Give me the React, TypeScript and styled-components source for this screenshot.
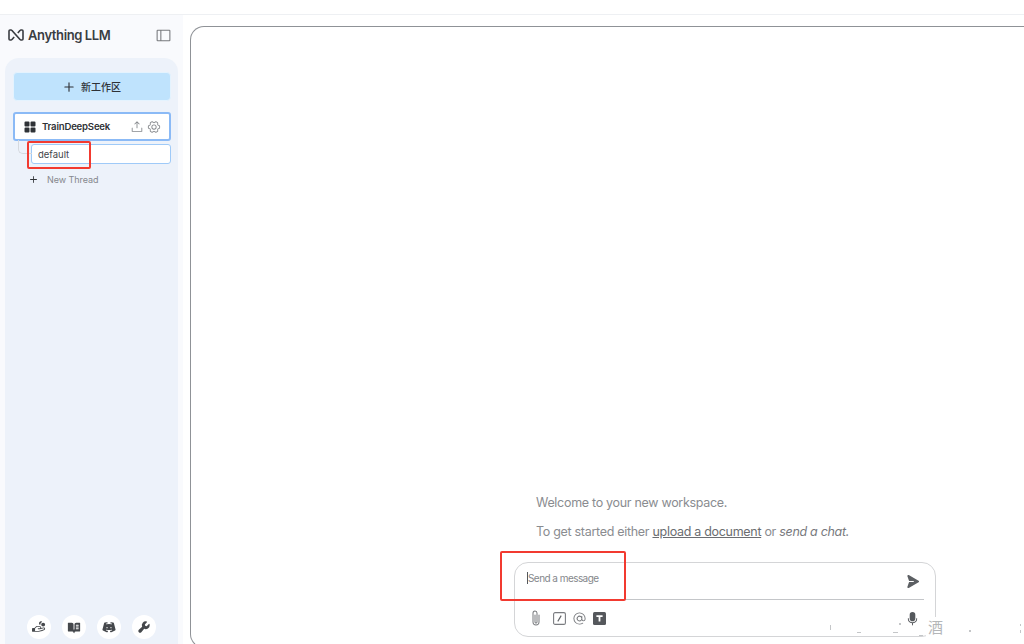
import styled, { createGlobalStyle } from "styled-components";
import {
    PiAt,
    PiBookOpenTextFill,
    PiDiscordLogoFill,
    PiGearSix,
    PiHandCoinsFill,
    PiMicrophoneFill,
    PiPaperclipHorizontal,
    PiPaperPlaneRightFill,
    PiPlusBold,
    PiSidebarSimple,
    PiSquaresFourFill,
    PiUploadSimple,
    PiWrenchFill,
} from "react-icons/pi";

const GlobalStyle = createGlobalStyle`
    html, body {
        margin: 0;
        background: #fff;
        font-family: "Inter", "Liberation Sans", sans-serif;
    }
    * {
        box-sizing: border-box;
    }
`;

const Page = styled.div`
    position: relative;
    width: 1024px;
    height: 644px;
    overflow: hidden;
    background: #fff;
    padding-top: 14px;
`;

const Shell = styled.div`
    height: 630px;
    display: grid;
    grid-template-columns: 190px 1fr;
    background: #fff;
    border-top: 1px solid #eef0f3;
`;

const Sidebar = styled.aside`
    display: flex;
    flex-direction: column;
    background: #f9fafd;
    padding-left: 5px;
    width: 183px;
`;

const SidebarHeader = styled.div`
    height: 43px;
    display: flex;
    align-items: center;
    justify-content: space-between;
    padding: 0 11px 3px 3px;
    color: #3f4247;
`;

const Logo = styled.div`
    display: flex;
    align-items: center;
    gap: 4px;
    font-size: 13px;
    font-weight: 600;
    letter-spacing: -0.4px;
    color: #3a3d42;
`;

const CollapseButton = styled.span`
    display: flex;
    font-size: 17px;
    color: #77797d;
`;

const SidebarPanel = styled.div`
    position: relative;
    flex: 1;
    width: 173px;
    display: flex;
    flex-direction: column;
    background: #edf2fa;
    border-radius: 14px 14px 0 0;
    padding: 14px 7px 5px 8px;
`;

const NewWorkspace = styled.button`
    height: 29px;
    width: 158px;
    display: flex;
    align-items: center;
    justify-content: center;
    gap: 6px;
    border: 1px solid #e4f3fe;
    border-radius: 4px;
    background: #bfe3fd;
    color: #2e3136;
    font-family: "Noto Sans CJK SC", sans-serif;
    font-size: 10px;
    font-weight: 500;
    padding: 0;

    svg {
        font-size: 12px;
    }
`;

const WorkspaceRow = styled.div`
    margin-top: 11px;
    height: 29px;
    display: flex;
    align-items: center;
    background: #fff;
    border: 2px solid #8bbaf6;
    border-radius: 3px;
    padding: 0 8px;
    color: #2f3236;
    font-size: 9.6px;
    font-weight: 600;
    letter-spacing: -0.2px;
`;

const WorkspaceName = styled.span`
    flex: 1;
    margin: 0 0 1px 4px;
`;

const RowIcon = styled.span<{ $gap?: number }>`
    display: flex;
    font-size: 14px;
    color: #85888c;
    margin-left: ${(p) => p.$gap ?? 0}px;
`;

const WorkspaceGlyph = styled.span`
    display: flex;
    font-size: 16px;
    margin-left: -1px;
    color: #2f3236;
`;

const ThreadConnector = styled.span`
    position: absolute;
    left: 13px;
    top: 82px;
    width: 14px;
    height: 14px;
    border: 1px solid #d5d9df;
    border-top: none;
    border-right: none;
    border-radius: 0 0 0 5px;
`;

const ThreadRow = styled.div`
    margin: 3px 0 0 18px;
    height: 20px;
    width: 140px;
    display: flex;
    align-items: center;
    padding-left: 6px;
    background: #fff;
    border: 1px solid #9fcaf8;
    border-radius: 3px;
    font-size: 9.5px;
    color: #43464a;
`;

const NewThread = styled.div`
    margin: 10px 0 0 16px;
    display: flex;
    align-items: center;
    gap: 9px;
    font-size: 9px;
    letter-spacing: -0.05px;
    color: #85888d;

    svg {
        font-size: 9px;
        color: #2f3236;
    }
`;

const FooterIcons = styled.div`
    margin-top: auto;
    display: flex;
    justify-content: center;
    gap: 11px;
    padding: 0 1px 4px 0;
`;

const RoundIcon = styled.span`
    width: 24px;
    height: 24px;
    display: flex;
    align-items: center;
    justify-content: center;
    border-radius: 50%;
    background: #fff;
    color: #45484c;
    font-size: 14px;
`;

const Main = styled.main`
    margin-top: 11px;
    height: 622px;
    display: flex;
    flex-direction: column;
    align-items: flex-end;
    justify-content: flex-end;
    background: #fff;
    border: 1px solid #8f9297;
    border-right: none;
    border-radius: 14px 0 0 14px;
    padding: 0 88px 10px 0;
`;

const ChatColumn = styled.div`
    width: 422px;
`;

const Welcome = styled.div`
    padding-left: 22px;
    margin-bottom: 23px;
    color: #8a8c90;
    font-size: 12.5px;
    letter-spacing: -0.3px;
    line-height: 15px;

    p {
        margin: 0 0 14px;
    }

    p:last-child {
        margin-bottom: 0;
    }

    a {
        color: #6b6d71;
        text-decoration: underline;
    }

    em {
        color: #77797d;
    }
`;

const PromptBox = styled.div`
    height: 75px;
    background: #fff;
    border: 1px solid #d4d5d7;
    border-radius: 14px;
`;

const InputRow = styled.div`
    height: 37px;
    display: flex;
    align-items: center;
    justify-content: space-between;
    margin-right: 11px;
    padding: 0 4px 0 12px;
    border-bottom: 1.5px solid #c4c6c9;
    color: #85878b;
    font-size: 10px;
    letter-spacing: -0.55px;
`;

const Caret = styled.span`
    border-left: 1px solid #55585c;
    margin-bottom: 6px;
`;

const SendIcon = styled.span`
    display: flex;
    font-size: 15px;
    color: #5c5f63;
`;

const ToolRow = styled.div`
    height: 36px;
    display: flex;
    align-items: center;
    padding: 0 15px 0 13px;
    color: #77797d;
    gap: 6px;
`;

const ToolIcon = styled.span`
    display: flex;
    font-size: 15px;
`;

const ClipIcon = styled(ToolIcon)`
    font-size: 16px;
    transform: rotate(90deg);
    margin-right: 3px;
`;

const MicIcon = styled(ToolIcon)`
    margin-left: auto;
    color: #55585c;
`;

const RedBox = styled.div<{ $x: number; $y: number; $w: number; $h: number }>`
    position: absolute;
    left: ${(p) => p.$x}px;
    top: ${(p) => p.$y}px;
    width: ${(p) => p.$w}px;
    height: ${(p) => p.$h}px;
    border: 2px solid #f23a30;
    border-radius: 2px;
    pointer-events: none;
`;

const Watermark = styled.div`
    position: absolute;
    left: 926px;
    top: 617px;
    height: 24px;
    padding: 0 2px;
    background: #fff;
    font-family: "Noto Sans CJK SC", sans-serif;
    font-size: 15px;
    line-height: 20px;
    color: #b4b6b8;
`;

const Speck = styled.span<{ $x: number; $y: number; $w: number; $h: number }>`
    position: absolute;
    left: ${(p) => p.$x}px;
    top: ${(p) => p.$y}px;
    width: ${(p) => p.$w}px;
    height: ${(p) => p.$h}px;
    background: #c4c6c8;
`;

const specks = [
    { x: 830, y: 625, w: 1, h: 5 },
    { x: 857, y: 632, w: 4, h: 1 },
    { x: 893, y: 632, w: 5, h: 1 },
    { x: 899, y: 623, w: 2, h: 2 },
    { x: 919, y: 635, w: 4, h: 1 },
    { x: 969, y: 630, w: 2, h: 2 },
    { x: 1020, y: 624, w: 1, h: 2 },
    { x: 1020, y: 630, w: 1, h: 3 },
];

function AnythingMark() {
    return (
        <svg width="16" height="12" viewBox="0 0 16 12" fill="none" stroke="#3a3d42" strokeWidth="1.6">
            <path d="M6.2 8 L4 10.4 Q3.6 11 3 11 H2 Q1 11 1 10 V2 Q1 1 2 1 H3 Q3.6 1 4 1.6 L12 10.4 Q12.4 11 13 11 H14 Q15 11 15 10 V2 Q15 1 14 1 H13 Q12.4 1 12 1.6 L9.8 4" />
        </svg>
    );
}

function SlashBox() {
    return (
        <svg width="13" height="13" viewBox="0 0 13 13" fill="none" stroke="#7a7c80" strokeWidth="1.1">
            <rect x="0.6" y="0.6" width="11.8" height="11.8" rx="1.5" />
            <path d="M8.2 3.6 L4.8 9.4" stroke="#5f6165" />
        </svg>
    );
}

function TextBox() {
    return (
        <svg width="13" height="13" viewBox="0 0 13 13">
            <rect width="13" height="13" rx="1.5" fill="#55585c" />
            <path d="M3.4 3.2 H9.6 V5 H7.4 V9.6 H5.6 V5 H3.4 Z" fill="#fff" />
        </svg>
    );
}

export default function App() {
    return (
        <>
            <GlobalStyle />
            <Page>
                <Shell>
                    <Sidebar>
                        <SidebarHeader>
                            <Logo>
                                <AnythingMark />
                                Anything LLM
                            </Logo>
                            <CollapseButton>
                                <PiSidebarSimple />
                            </CollapseButton>
                        </SidebarHeader>
                        <SidebarPanel>
                            <NewWorkspace>
                                <PiPlusBold />
                                新工作区
                            </NewWorkspace>
                            <WorkspaceRow>
                                <WorkspaceGlyph>
                                    <PiSquaresFourFill />
                                </WorkspaceGlyph>
                                <WorkspaceName>TrainDeepSeek</WorkspaceName>
                                <RowIcon>
                                    <PiUploadSimple />
                                </RowIcon>
                                <RowIcon $gap={3}>
                                    <PiGearSix />
                                </RowIcon>
                            </WorkspaceRow>
                            <ThreadConnector />
                            <ThreadRow>default</ThreadRow>
                            <NewThread>
                                <PiPlusBold />
                                New Thread
                            </NewThread>
                            <FooterIcons>
                                <RoundIcon>
                                    <PiHandCoinsFill />
                                </RoundIcon>
                                <RoundIcon>
                                    <PiBookOpenTextFill />
                                </RoundIcon>
                                <RoundIcon>
                                    <PiDiscordLogoFill />
                                </RoundIcon>
                                <RoundIcon>
                                    <PiWrenchFill />
                                </RoundIcon>
                            </FooterIcons>
                        </SidebarPanel>
                    </Sidebar>
                    <Main>
                        <ChatColumn>
                            <Welcome>
                                <p>Welcome to your new workspace.</p>
                                <p>
                                    To get started either <a>upload a document</a> or <em>send a chat.</em>
                                </p>
                            </Welcome>
                            <PromptBox>
                                <InputRow>
                                    <Caret>Send a message</Caret>
                                    <SendIcon>
                                        <PiPaperPlaneRightFill />
                                    </SendIcon>
                                </InputRow>
                                <ToolRow>
                                    <ClipIcon>
                                        <PiPaperclipHorizontal />
                                    </ClipIcon>
                                    <ToolIcon>
                                        <SlashBox />
                                    </ToolIcon>
                                    <ToolIcon>
                                        <PiAt />
                                    </ToolIcon>
                                    <ToolIcon>
                                        <TextBox />
                                    </ToolIcon>
                                    <MicIcon>
                                        <PiMicrophoneFill />
                                    </MicIcon>
                                </ToolRow>
                            </PromptBox>
                        </ChatColumn>
                    </Main>
                </Shell>
                <RedBox $x={27} $y={141} $w={64} $h={28} />
                <RedBox $x={500} $y={551} $w={126} $h={50} />
                <Watermark>酒</Watermark>
                {specks.map((s) => (
                    <Speck key={`${s.x}-${s.y}`} $x={s.x} $y={s.y} $w={s.w} $h={s.h} />
                ))}
            </Page>
        </>
    );
}
